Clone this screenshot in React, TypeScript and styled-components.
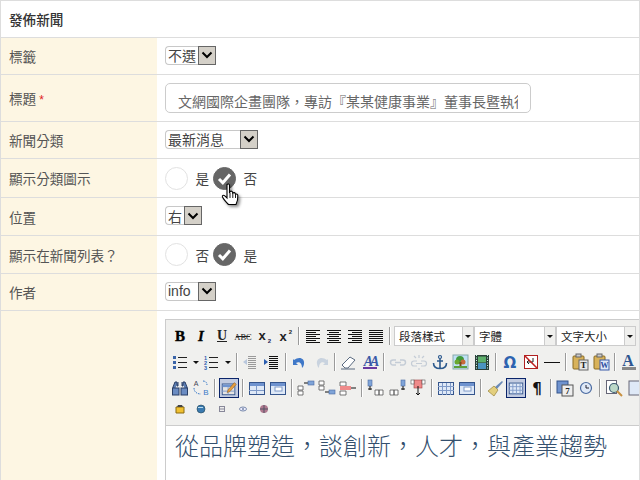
import React from 'react'
import styled, { createGlobalStyle } from 'styled-components'

const GlobalStyle = createGlobalStyle`
  html, body { margin: 0; padding: 0; background: #fff; overflow: hidden; }
  body { font-family: "Liberation Sans", "Noto Sans CJK TC", sans-serif; color: #444; }
`

const lines = (ys: number[], x1: number, x2: number, c = '#111') =>
  ys.map(y => <rect key={y} x={x1} y={y} width={x2 - x1} height={1} fill={c} />)

const alignIcon = (rows: [number, number][]) => (
  <>{rows.map(([a, b], i) => <rect key={i} x={a} y={4 + i * 2.0} width={b - a} height={1} fill="#111" />)}</>
)

const table = (x: number, y: number, w: number, h: number, fill = '#dfe9f7') => (
  <>
    <rect x={x + 0.5} y={y + 0.5} width={w} height={h} fill={fill} stroke="#35558c" />
    <rect x={x + 1} y={y + 1} width={w - 1} height={3} fill="#6f93cf" />
    <path d={`M${x} ${y + 8.5}h${w}M${x + w / 2} ${y + 4}v${h - 4}`} stroke="#7f9ac8" />
  </>
)

const icons: Record<string, React.ReactNode> = {
  bold: <text x="10" y="15" textAnchor="middle" fontFamily="Liberation Serif" fontWeight="700" fontSize="15" fill="#000" stroke="#000" strokeWidth=".4">B</text>,
  italic: <text x="10" y="15" textAnchor="middle" fontFamily="Liberation Serif" fontWeight="700" fontStyle="italic" fontSize="15" fill="#000" stroke="#000" strokeWidth=".3">I</text>,
  underline: <><text x="10" y="14" textAnchor="middle" fontFamily="Liberation Serif" fontWeight="700" fontSize="14" fill="#222">U</text><rect x="5" y="15" width="10" height="1" fill="#222" /></>,
  strike: <><text x="10" y="13.500" textAnchor="middle" fontFamily="Liberation Serif" fontSize="8.500" fill="#222">ABC</text><rect x="3" y="10" width="14" height="1" fill="#222" /></>,
  sub: <><text x="8" y="14" textAnchor="middle" fontFamily="Liberation Sans" fontWeight="700" fontSize="13" fill="#222">x</text><text x="15.500" y="17" textAnchor="middle" fontFamily="Liberation Sans" fontWeight="700" fontSize="6" fill="#225">2</text></>,
  sup: <><text x="8" y="15" textAnchor="middle" fontFamily="Liberation Sans" fontWeight="700" fontSize="13" fill="#222">x</text><text x="15.500" y="8" textAnchor="middle" fontFamily="Liberation Sans" fontWeight="700" fontSize="6" fill="#222">2</text></>,
  left: alignIcon([[3, 17], [3, 13], [3, 17], [3, 13], [3, 17], [3, 13], [3, 17]]),
  center: alignIcon([[3, 17], [5, 15], [3, 17], [5, 15], [3, 17], [5, 15], [3, 17]]),
  right: alignIcon([[3, 17], [7, 17], [3, 17], [7, 17], [3, 17], [7, 17], [3, 17]]),
  full: alignIcon([[3, 17], [3, 17], [3, 17], [3, 17], [3, 17], [3, 17], [3, 17]]),
  bullist: <><g fill="#3a64a8"><rect x="3" y="4" width="3" height="3" /><rect x="3" y="9" width="3" height="3" /><rect x="3" y="14" width="3" height="3" /></g>{lines([5, 10, 15], 8, 17, '#222')}</>,
  numlist: <><g fill="#2f5fb0" fontSize="5.500" fontFamily="Liberation Sans" fontWeight="700"><text x="2" y="8">1</text><text x="2" y="13">2</text><text x="2" y="18">3</text></g>{lines([5, 10, 15], 7, 16, '#222')}</>,
  arrow: <path d="M2 9h6l-3 3z" fill="#111" />,
  outdent: <><path d="M2 10l4-3v6z" fill="#b9c8dd" />{lines([4, 6, 8, 10, 12, 14, 16], 7, 15, '#9a9a9a')}</>,
  indent: <><path d="M6 10l-4-3v6z" fill="#2a5db0" />{lines([4, 6, 8, 10, 12, 14, 16], 7, 16, '#111')}</>,
  undo: <path d="M4 8c5-4 11-2 10 4-.3 2-1 3-2 4 0-4-2-7-6-5l2 2H3V7z" fill="#3f78c8" />,
  redo: <path d="M16 8c-5-4-11-2-10 4 .3 2 1 3 2 4 0-4 2-7 6-5l-2 2h5V7z" fill="#c9d3df" />,
  erase: <><path d="M3 13l8-8 5 3-7 8H6z" fill="#fff" stroke="#5a6a80" /><path d="M2 17h14" stroke="#5a6a80" /></>,
  forecolor: <><text x="10" y="14" textAnchor="middle" letterSpacing="-3" fontFamily="Liberation Serif" fontStyle="italic" fontWeight="700" fontSize="14" fill="#3a5aa8">AA</text><rect x="3" y="15" width="14" height="2" fill="#6a3aa0" /></>,
  link: <path d="M8 8H5a2.500 2.500 0 0 0 0 5h3M12 8h3a2.500 2.500 0 0 1 0 5h-3M7 10.500h6" fill="none" stroke="#c4ccd6" strokeWidth="1.500" />,
  unlink: <path d="M8 9H5a2.500 2.500 0 0 0 0 5h3M12 9h3a2.500 2.500 0 0 1 0 5h-3M7 11.500h6M10 3v3M5 4l2 2M15 4l-2 2M10 16v2" fill="none" stroke="#c4ccd6" strokeWidth="1.200" />,
  anchor: <><circle cx="10" cy="5" r="1.500" fill="none" stroke="#2d5a8e" strokeWidth="1.200" /><path d="M10 6.500V16M7 9h6M3.500 11c0 4 3 5.500 6.500 5.500s6.500-1.500 6.500-5.500" fill="none" stroke="#2d5a8e" strokeWidth="1.600" /></>,
  image: <><rect x="2" y="3" width="15" height="14" fill="#bfe0f5" stroke="#8aa" /><circle cx="9" cy="8" r="4" fill="#3f9a3a" /><circle cx="6" cy="10" r="2.500" fill="#6aa82f" /><circle cx="12" cy="10" r="2.500" fill="#c86a3a" /><rect x="8.500" y="10" width="2" height="5" fill="#7a4a1a" /><rect x="3" y="14" width="13" height="2" fill="#5ba03a" /></>,
  media: <><rect x="3" y="3" width="14" height="15" fill="#2b3f38" /><rect x="6" y="4.500" width="8" height="6" fill="#5db06a" /><rect x="6" y="11" width="8" height="6" fill="#4a94c0" /><path d="M4.500 3v15M15.500 3v15" stroke="#cfe" strokeDasharray="1 1.500" /></>,
  omega: <text x="10" y="16" textAnchor="middle" fontFamily="DejaVu Sans" fontWeight="700" fontSize="15" fill="#2d63b0">Ω</text>,
  nobreak: <><rect x="3.500" y="3.500" width="13" height="13" fill="#fff" stroke="#b02020" /><path d="M6 10h6V6M6 10l2-2M6 10l2 2" fill="none" stroke="#222" /><path d="M4 4l12 12" stroke="#c02020" strokeWidth="1.500" /></>,
  hr: <rect x="2" y="10" width="16" height="1" fill="#111" />,
  pastetext: <><rect x="3" y="4" width="11" height="13" rx="1" fill="#d8b25a" stroke="#8a6a20" /><rect x="6" y="2" width="5" height="3" fill="#ccc" stroke="#666" /><rect x="9" y="8" width="9" height="10" fill="#e8e8e8" stroke="#666" /><text x="13.500" y="16" textAnchor="middle" fontFamily="Liberation Serif" fontWeight="700" fontSize="9" fill="#222">T</text></>,
  pasteword: <><rect x="3" y="4" width="11" height="13" rx="1" fill="#d8b25a" stroke="#8a6a20" /><rect x="6" y="2" width="5" height="3" fill="#ccc" stroke="#666" /><rect x="9" y="8" width="9" height="10" fill="#dfe8f7" stroke="#3a5aa8" /><text x="13.500" y="16" textAnchor="middle" fontFamily="Liberation Serif" fontWeight="700" fontSize="8" fill="#2a4aa0">W</text></>,
  bigA: <><text x="9" y="14" textAnchor="middle" fontFamily="Liberation Serif" fontWeight="700" fontSize="16" fill="#2d5590">A</text><rect x="3" y="15" width="14" height="3" fill="#888" /></>,
  find: <><path d="M3 16V9l2-5h2v4h1V4M17 16V9l-2-5h-2v4h-1V4" fill="#5d7fb4" stroke="#2b3f66" /><rect x="2.500" y="10" width="6.500" height="7" fill="#6b8cc2" stroke="#2b3f66" /><rect x="11" y="10" width="6.500" height="7" fill="#6b8cc2" stroke="#2b3f66" /></>,
  replace: <><text x="5" y="8" fontFamily="Liberation Sans" fontSize="7" textAnchor="middle" fill="#445">A</text><text x="15" y="17" fontFamily="Liberation Sans" fontSize="8" textAnchor="middle" fill="#3a7ac8">B</text><path d="M12 3c3 0 4 2 4 4M3 10c0 4 3 6 7 6" fill="none" stroke="#3a7ac8" strokeDasharray="1.500 1" /></>,
  edit: <>{table(2, 5, 14, 12, '#e4e4e4')}<path d="M9 12l7-8 2 2-7 8-3 1z" fill="#e8a040" stroke="#8a5a20" strokeWidth=".6" /></>,
  tablectl: <>{table(2, 4, 15, 12)}</>,
  grid: <><rect x="2.500" y="4.500" width="15" height="12" fill="#dfe9f7" stroke="#35558c" /><path d="M2 8.500h16M2 12.500h16M6.500 5v12M10.500 5v12M14.500 5v12" stroke="#7f9ac8" /></>,
  tablerow: <><rect x="2.500" y="4.500" width="15" height="12" fill="#dfe9f7" stroke="#35558c" /><rect x="3" y="5" width="14" height="3" fill="#6f93cf" /><rect x="7" y="9" width="7" height="4" fill="#fff" stroke="#7f9ac8" /></>,
  rowbefore: <><path d="M2 8h5v4H2zM2 13h5v4H2z" fill="#fff" stroke="#555" strokeWidth=".8" /><path d="M8 5h4" stroke="#111" /><rect x="12" y="3" width="6" height="4" fill="#7fa4d8" stroke="#4a6aa0" strokeWidth=".6" /></>,
  rowafter: <><path d="M2 3h5v4H2zM2 8h5v4H2z" fill="#fff" stroke="#555" strokeWidth=".8" /><path d="M8 14h4" stroke="#111" /><rect x="12" y="12" width="6" height="4" fill="#7fa4d8" stroke="#4a6aa0" strokeWidth=".6" /></>,
  rowdel: <><path d="M2 4h6v4H2zM2 13h6v4H2z" fill="#fff" stroke="#555" strokeWidth=".8" /><rect x="2" y="8" width="11" height="4" fill="#ef8a8a" /><path d="M13 10h5" stroke="#111" /></>,
  colbefore: <><rect x="2" y="2" width="4" height="6" fill="#7fa4d8" stroke="#4a6aa0" strokeWidth=".6" /><path d="M4 8v4M2 11h4" stroke="#111" /><path d="M9 12h4v5H9zM13 12h4v5h-4z" fill="#fff" stroke="#555" strokeWidth=".8" /></>,
  colafter: <><rect x="14" y="2" width="4" height="6" fill="#7fa4d8" stroke="#4a6aa0" strokeWidth=".6" /><path d="M16 8v4M14 11h4" stroke="#111" /><path d="M3 12h4v5H3zM7 12h4v5H7z" fill="#fff" stroke="#555" strokeWidth=".8" /></>,
  coldel: <><rect x="6" y="2" width="8" height="8" fill="#ef8a8a" stroke="#a04040" strokeWidth=".6" /><rect x="3" y="2" width="3" height="4" fill="#fff" stroke="#555" strokeWidth=".6" /><rect x="14" y="2" width="3" height="4" fill="#fff" stroke="#555" strokeWidth=".6" /><path d="M10 8v9M8 15l2 2 2-2" fill="none" stroke="#111" /></>,
  brush: <><path d="M10 9l7-6 1 1-6 7z" fill="#6a8ab8" /><path d="M3 13l6-5 4 4-4 6z" fill="#e3cf7e" stroke="#98833a" strokeWidth=".7" /></>,
  pilcrow: <text x="10" y="16" textAnchor="middle" fontFamily="DejaVu Sans" fontWeight="700" fontSize="15" fill="#111">¶</text>,
  date: <><rect x="2" y="3" width="11" height="12" fill="#6f93cf" stroke="#35558c" /><rect x="7" y="7" width="11" height="11" fill="#eee" stroke="#555" /><text x="12.500" y="16" textAnchor="middle" fontFamily="Liberation Serif" fontWeight="700" fontSize="9" fill="#222">7</text></>,
  time: <><circle cx="10" cy="10" r="5.500" fill="#dfe9f7" stroke="#4a6aa0" strokeWidth="1.200" /><path d="M10 7v3h3" fill="none" stroke="#223" /></>,
  preview: <><rect x="2.500" y="2.500" width="10" height="13" fill="#fff" stroke="#667" /><circle cx="10" cy="10" r="4.500" fill="#bcd8c8" stroke="#3a5a70" strokeWidth="1.200" /><path d="M13 13l5 5" stroke="#c89040" strokeWidth="2" /></>,
  docs: <rect x="4" y="3" width="12" height="14" fill="#dfe9f7" stroke="#667" />,
  template: <><path d="M6 8h8v6H6z" fill="#f0c030" stroke="#8a6a10" /><path d="M7 8l1-2h4l1 2" fill="#444" /></>,
  globe: <><circle cx="10" cy="10" r="4" fill="#3a7ab0" stroke="#245" strokeWidth=".6" /><path d="M7 8.500h5" stroke="#bde" /></>,
  pagebreak: <><rect x="7.500" y="7.500" width="5" height="5" fill="#eee" stroke="#889" /><path d="M7 10h6" stroke="#889" /></>,
  eye: <><ellipse cx="10" cy="10" rx="3.500" ry="2" fill="#eef" stroke="#78a" /><circle cx="10" cy="10" r="1" fill="#78a" /></>,
  flag: <><circle cx="10" cy="10" r="4" fill="#b07a90" /><path d="M6 10h8M10 6v8" stroke="#556" /></>,
}

const Page = styled.div`
  width: 640px;
  height: 480px;
  box-sizing: border-box;
  border: 1px solid #ddd;
  border-bottom: none;
  overflow: hidden;
`

const Header = styled.div`
  height: 36px;
  padding-left: 8px;
  display: flex;
  align-items: center;
  font-size: 13.6px;
  font-weight: 500;
  color: #333;
  border-bottom: 1px solid #ddd;
`

const Row = styled.div<{ $h: number }>`
  display: flex;
  height: ${p => p.$h}px;
  border-bottom: 1px solid #ddd;
`

const Label = styled.div`
  width: 156px;
  flex: none;
  padding-left: 8px;
  box-sizing: border-box;
  display: flex;
  align-items: center;
  background: #fdf6e3;
  font-size: 13.6px;
  color: #555;
`

const Required = styled.span`
  color: #e02020;
  margin-left: 3px;
  margin-top: 4px;
  font-size: 12px;
`

const Value = styled.div`
  flex: 1;
  min-width: 0;
  padding-left: 8px;
  display: flex;
  align-items: center;
  position: relative;
  font-size: 13.6px;
`

const Select = styled.div<{ $w: number }>`
  width: ${p => p.$w}px;
  height: 19px;
  box-sizing: border-box;
  border: 1px solid #c8c8c8;
  border-right: none;
  border-radius: 4px 2px 2px 4px;
  display: flex;
  align-items: center;
  justify-content: space-between;
  padding-left: 2px;
  margin-top: -2px;
  font-size: 14px;
  color: #444;
  background: #fff;
`

const SelectArrow = styled.span`
  width: 18px;
  height: 19px;
  flex: none;
  box-sizing: border-box;
  border: 1px solid #666;
  background: #d4d0c8;
  display: flex;
  align-items: center;
  justify-content: center;
`

const TitleInput = styled.input`
  width: 366px;
  height: 30px;
  box-sizing: border-box;
  border: 1px solid #ccc;
  border-radius: 5px;
  padding: 6px 12px 0 12px;
  font-family: inherit;
  font-size: 14px;
  color: #666;
  background: #fff;
  outline: none;
  margin-top: -1px;
`

const Choice = styled.div`
  display: flex;
  align-items: center;
  font-size: 13.6px;
  color: #444;
`

const Circle = styled.span<{ $on?: boolean }>`
  width: 23px;
  height: 23px;
  box-sizing: border-box;
  border-radius: 50%;
  border: 1px solid ${p => (p.$on ? '#666' : '#e2e2e2')};
  background: ${p => (p.$on ? '#666' : '#fff')};
  display: flex;
  align-items: center;
  justify-content: center;
`

const ChoiceText = styled.span`
  margin: 0 4px 0 7.5px;
  width: 13.5px;
`

const Cursor = styled.svg`
  position: absolute;
  left: 64px;
  top: 24px;
  filter: drop-shadow(2px 2px 1.5px rgba(0, 0, 0, 0.45));
`

const EditorRow = styled.div`
  display: flex;
  height: 169px;
`

const EditorCell = styled.div`
  flex: 1;
  min-width: 0;
  padding: 8px 0 0 8px;
  overflow: hidden;
`

const Editor = styled.div`
  width: 520px;
  height: 170px;
  box-sizing: border-box;
  border: 1px solid #ccc;
`

const Toolbar = styled.div`
  height: 106px;
  background: #f0f0ee;
  border-bottom: 1px solid #ccc;
  padding: 3px 0 0 4px;
  box-sizing: border-box;
  display: flex;
  flex-direction: column;
`

const ToolRow = styled.div<{ $h?: number }>`
  display: flex;
  align-items: center;
  height: ${p => p.$h ?? 26}px;
  white-space: nowrap;
`

const Tool = styled.span<{ $active?: boolean; $w?: number }>`
  width: ${p => p.$w ?? 20}px;
  height: 20px;
  margin-right: ${p => (p.$w ? 0 : 1)}px;
  flex: none;
  box-sizing: border-box;
  display: block;
  ${p => (p.$active ? 'border: 1px solid #0a246a; background: #c2cbe0;' : '')}
  & > svg { display: block; width: 100%; height: 100%; }
`

const Sep = styled.span`
  width: 1px;
  height: 18px;
  flex: none;
  margin: 0 3px 0 2px;
  background: #9a9a9a;
  border-right: 1px solid #fff;
`

const ToolSelect = styled.span<{ $w: number }>`
  width: ${p => p.$w}px;
  height: 20px;
  flex: none;
  box-sizing: border-box;
  background: #fff;
  border: 1px solid #ccc;
  display: flex;
  align-items: center;
  justify-content: space-between;
  padding-left: 4px;
  font-size: 11.5px;
  color: #222;
`

const ToolSelectArrow = styled.span`
  width: 10px;
  height: 18px;
  background: #f0f0ee;
  border-left: 1px solid #ccc;
  display: flex;
  align-items: center;
  justify-content: center;
  &::after {
    content: '';
    border: 3px solid transparent;
    border-top: 3px solid #111;
    border-bottom: none;
  }
`

const Content = styled.div`
  padding: 3px 0 0 9px;
  font-size: 24px;
  font-weight: 300;
  line-height: 36px;
  color: #34506e;
  white-space: nowrap;
`

const Chevron = () => (
  <svg width="12" height="8" viewBox="0 0 12 8">
    <path d="M1.500 1.500L6 6l4.500-4.500" fill="none" stroke="#000" strokeWidth="2" />
  </svg>
)

const Check = () => (
  <svg width="15" height="13" viewBox="0 0 15 13">
    <path d="M2 7l3.800 3.800L13 2.500" fill="none" stroke="#fff" strokeWidth="3" />
  </svg>
)

const SelectBox = ({ w, text }: { w: number; text: string }) => (
  <Select $w={w}>
    {text}
    <SelectArrow><Chevron /></SelectArrow>
  </Select>
)

const Radio = ({ on, text }: { on?: boolean; text: string }) => (
  <Choice>
    <Circle $on={on}>{on && <Check />}</Circle>
    <ChoiceText>{text}</ChoiceText>
  </Choice>
)

type Item = string | { sep: true } | { sel: string; w: number }

const sep: Item = { sep: true }
const toolbarRows: Item[][] = [
  ['bold', 'italic', 'underline', 'strike', 'sub', 'sup', sep, 'left', 'center', 'right', 'full', sep,
    { sel: '段落樣式', w: 80 }, { sel: '字體', w: 82 }, { sel: '文字大小', w: 80 }],
  ['bullist', 'arrow10', 'numlist', 'arrow10', sep, 'outdent', 'indent', sep, 'undo', 'redo', sep, 'erase', 'forecolor', sep,
    'link', 'unlink', 'anchor', 'image', 'media', sep, 'omega', 'nobreak', 'hr', sep, 'pastetext', 'pasteword', sep, 'bigA'],
  ['find', 'replace', sep, '*edit', sep, 'tablectl', 'tablerow', sep, 'rowbefore', 'rowafter', 'rowdel', sep,
    'colbefore', 'colafter', 'coldel', sep, 'grid', 'tablerow', sep, 'brush', '*grid', 'pilcrow', sep, 'date', 'time', sep, 'preview', 'docs'],
  ['template', 'globe', 'pagebreak', 'eye', 'flag'],
]

const renderItem = (item: Item, key: number) => {
  if (typeof item !== 'string') {
    if ('sep' in item) return <Sep key={key} />
    return (
      <ToolSelect key={key} $w={item.w}>
        {item.sel}
        <ToolSelectArrow />
      </ToolSelect>
    )
  }
  const active = item.startsWith('*')
  const narrow = item === 'arrow10'
  const name = active ? item.slice(1) : narrow ? 'arrow' : item
  return (
    <Tool key={key} $active={active} $w={narrow ? 11 : undefined}>
      <svg viewBox={narrow ? '0 0 11 20' : '0 0 20 20'}>{icons[name]}</svg>
    </Tool>
  )
}

const App: React.FC = () => (
  <Page>
    <GlobalStyle />
    <Header>發佈新聞</Header>
    <Row $h={36}>
      <Label>標籤</Label>
      <Value><SelectBox w={51} text="不選" /></Value>
    </Row>
    <Row $h={46}>
      <Label>標題<Required>*</Required></Label>
      <Value>
        <TitleInput readOnly value="文網國際企畫團隊，專訪『某某健康事業』董事長暨執行長" />
      </Value>
    </Row>
    <Row $h={36}>
      <Label>新聞分類</Label>
      <Value><SelectBox w={93} text="最新消息" /></Value>
    </Row>
    <Row $h={38}>
      <Label>顯示分類圖示</Label>
      <Value>
        <Radio text="是" />
        <Radio on text="否" />
        <Cursor width="20" height="26" viewBox="0 0 20 26">
          <path
            d="M6 1.500c1 -1 2.500 -.5 2.500 1V10l.5-1.500c1-.8 2.300-.3 2.500.7l.3.8c1-.8 2.200-.4 2.500.7l.2.5c1-.5 2.200 0 2.300 1.200.2 3 0 6-1.800 9.100H7.500C6 20 3 17 1.500 14c-.6-1.300.8-2.300 2-1.300L6 15V3z"
            fill="#fff"
            stroke="#000"
            strokeWidth="1.100"
          />
          <path d="M9 10v5M11.800 10v5M14.500 11.500V15" stroke="#000" strokeWidth=".9" />
        </Cursor>
      </Value>
    </Row>
    <Row $h={37}>
      <Label>位置</Label>
      <Value><SelectBox w={37} text="右" /></Value>
    </Row>
    <Row $h={37}>
      <Label>顯示在新聞列表？</Label>
      <Value>
        <Radio text="否" />
        <Radio on text="是" />
      </Value>
    </Row>
    <Row $h={36}>
      <Label>作者</Label>
      <Value><SelectBox w={51} text="info" /></Value>
    </Row>
    <EditorRow>
      <Label />
      <EditorCell>
        <Editor>
          <Toolbar>
            {toolbarRows.map((items, i) => (
              <ToolRow key={i} $h={i === 3 ? 16 : 26}>{items.map(renderItem)}</ToolRow>
            ))}
          </Toolbar>
          <Content>從品牌塑造，談創新，人才，與產業趨勢</Content>
        </Editor>
      </EditorCell>
    </EditorRow>
  </Page>
)

export default App
